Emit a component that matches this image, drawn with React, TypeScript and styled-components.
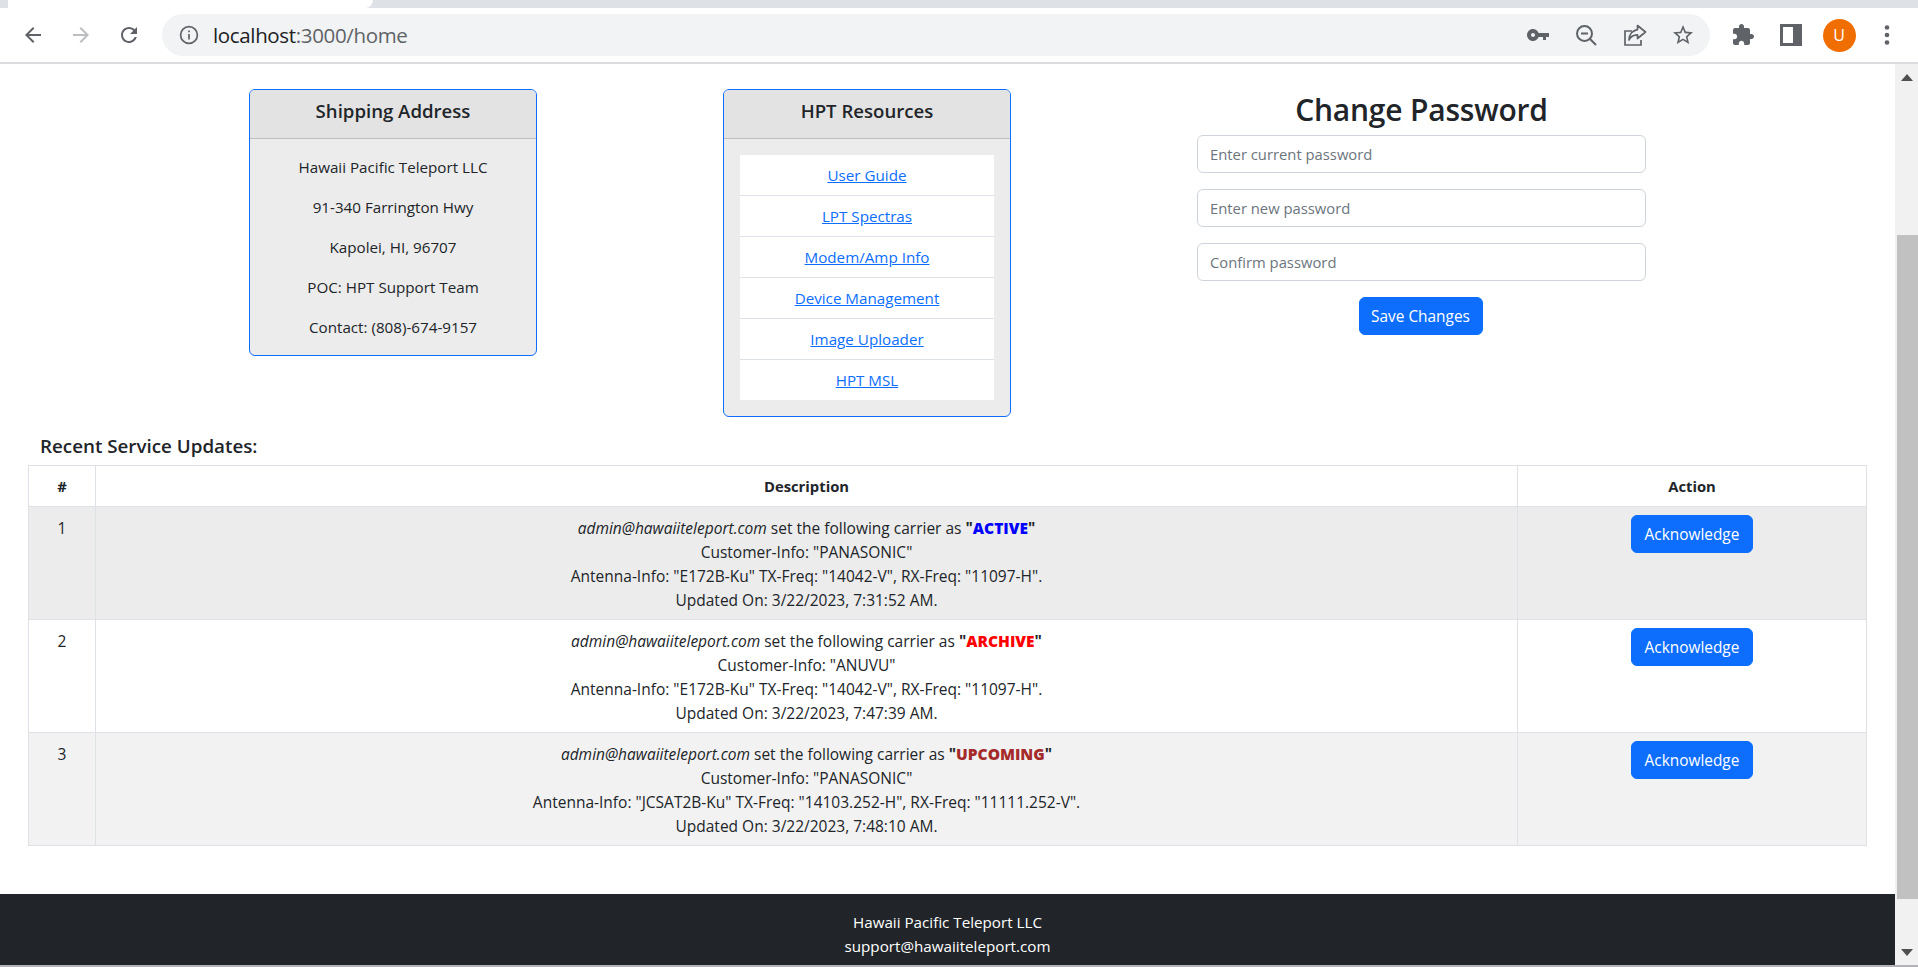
import styled, { createGlobalStyle } from "styled-components";

const GlobalStyle = createGlobalStyle`
  html, body {
    margin: 0;
    height: 967px;
    overflow: hidden;
    background: #ffffff;
  }
  * {
    box-sizing: border-box;
  }
`;

const FONT = `"Open Sans", "Noto Sans", "Liberation Sans", sans-serif`;

const Window = styled.div`
  display: flex;
  flex-direction: column;
  width: 1918px;
  height: 967px;
  overflow: hidden;
  font: 400 15.2px/24px ${FONT};
  color: #212529;
  background: #ffffff;
`;

const TabStrip = styled.div`
  display: flex;
  flex: none;
  height: 8px;
  background: #dee1e6;
`;

const ActiveTab = styled.div`
  width: 365px;
  margin-left: 8px;
  background: #ffffff;
  border-bottom-right-radius: 8px;
`;

const Toolbar = styled.div`
  display: flex;
  flex: none;
  align-items: center;
  height: 56px;
  padding: 0 7px 0 9px;
  background: #ffffff;
  border-bottom: 2px solid #dadce0;
`;

const NavButton = styled.div<{ $muted?: boolean }>`
  display: flex;
  flex: none;
  align-items: center;
  justify-content: center;
  width: 48px;
  height: 40px;
  color: ${(p) => (p.$muted ? "#bcbec1" : "#5f6368")};
`;

const Omnibox = styled.div`
  display: flex;
  flex: 1;
  align-items: center;
  height: 42px;
  margin: 0 9px;
  padding: 0 3px 0 17px;
  border-radius: 21px;
  background: #f1f3f4;
`;

const SiteInfo = styled.div`
  display: flex;
  flex: none;
  color: #5f6368;
  margin-right: 14px;
`;

const Url = styled.div`
  flex: 1;
  font: 400 20.5px/28px ${FONT};
  letter-spacing: -0.35px;
  color: #5f6368;
  & > b {
    font-weight: 400;
    color: #202124;
  }
`;

const OmniIcon = styled.div`
  display: flex;
  flex: none;
  align-items: center;
  justify-content: center;
  width: 48.3px;
  color: #5f6368;
`;

const ToolIcon = styled.div`
  display: flex;
  flex: none;
  align-items: center;
  justify-content: center;
  width: 48px;
  color: #5f6368;
`;

const Avatar = styled.div`
  display: flex;
  align-items: center;
  justify-content: center;
  width: 33px;
  height: 33px;
  border-radius: 50%;
  background: #f06e00;
  color: #ffffff;
  font: 400 16px/1 ${FONT};
`;

const Viewport = styled.div`
  display: flex;
  flex: 1;
  min-height: 0;
`;

const Page = styled.div`
  flex: 1;
  min-width: 0;
  overflow: hidden;
`;

const TopRow = styled.div`
  display: flex;
  align-items: flex-start;
  gap: 186px;
  padding: 25px 0 0 249px;
`;

const Card = styled.section`
  width: 288px;
  flex: none;
  border: 1px solid #0d6efd;
  border-radius: 6px;
  background: #ececec;
  overflow: hidden;
`;

const CardHeader = styled.h5`
  margin: 0;
  height: 49px;
  padding-top: 9px;
  font: 600 18.6px/24px ${FONT};
  text-align: center;
  color: #212529;
  background: #e3e3e3;
  border-bottom: 1px solid #bfbfbf;
`;

const CardBody = styled.div`
  padding: 16px;
  text-align: center;
`;

const AddressLine = styled.p`
  margin: 0 0 16px;
  &:last-child {
    margin-bottom: 0;
  }
`;

const LinkList = styled.ul`
  margin: 0;
  padding: 0;
  list-style: none;
  background: #ffffff;
`;

const LinkItem = styled.li`
  height: 41px;
  padding-top: 8px;
  border-bottom: 1px solid #dee2e6;
  &:last-child {
    height: 40px;
    border-bottom: 0;
  }
  & > a {
    color: #0d6efd;
    text-decoration: underline;
  }
`;

const PasswordForm = styled.form`
  display: flex;
  flex-direction: column;
  align-items: center;
  width: 449px;
  flex: none;
`;

const FormTitle = styled.h2`
  margin: 0 0 5px;
  height: 41px;
  font: 600 30px/41px ${FONT};
  letter-spacing: -0.2px;
  color: #212529;
`;

const PasswordInput = styled.input`
  display: block;
  width: 100%;
  height: 38px;
  margin-bottom: 16px;
  padding: 6px 12px;
  border: 1px solid #ced4da;
  border-radius: 6px;
  background: #ffffff;
  outline: none;
  font: 400 14.8px/24px ${FONT};
  &::placeholder {
    color: #6c757d;
    opacity: 1;
  }
`;

const PrimaryButton = styled.button`
  display: inline-block;
  width: 122px;
  height: 38px;
  padding: 2px 0 0;
  border: 1px solid #0d6efd;
  border-radius: 6px;
  background: #0d6efd;
  color: #ffffff;
  font: 400 15.4px/24px ${FONT};
`;

const SaveButton = styled(PrimaryButton)`
  width: 124px;
  margin-right: 2px;
`;

const UpdatesSection = styled.section`
  padding: 17px 28px 48px;
`;

const SectionTitle = styled.h5`
  margin: 0 0 7px;
  padding-left: 12px;
  font: 600 18.8px/24px ${FONT};
  color: #212529;
`;

const UpdatesTable = styled.table`
  width: 100%;
  table-layout: fixed;
  border-collapse: collapse;
  font-size: 15.5px;
`;

const HeadCell = styled.th`
  padding: 8px;
  border: 1px solid #dee2e6;
  font: 700 14.8px/24px ${FONT};
  text-align: center;
`;

const Row = styled.tr<{ $bg: string }>`
  background: ${(p) => p.$bg};
`;

const Cell = styled.td`
  padding: 9px 8px 7px;
  border: 1px solid #dee2e6;
  text-align: center;
  vertical-align: top;
`;

const ActionCell = styled(Cell)`
  padding: 8px;
`;

const Status = styled.b<{ $color: string }>`
  color: ${(p) => p.$color};
`;

const Footer = styled.footer`
  height: 100px;
  padding: 16px 0;
  background: #212529;
  color: #ffffff;
  text-align: center;
`;

const Scrollbar = styled.div`
  display: flex;
  flex: none;
  flex-direction: column;
  width: 23px;
  background: #f1f1f1;
`;

const ScrollArrow = styled.div`
  display: flex;
  flex: none;
  align-items: center;
  justify-content: center;
  height: 26px;
  color: #505050;
`;

const ScrollGap = styled.div<{ $h: number }>`
  flex: none;
  height: ${(p) => p.$h}px;
`;

const ScrollThumb = styled.div`
  flex: none;
  height: 664px;
  margin-left: 2px;
  background: #c1c1c1;
`;

const BottomEdge = styled.div`
  flex: none;
  height: 2px;
  background: #b4b2b7;
`;

type UpdateRow = {
  user: string;
  status: string;
  color: string;
  customer: string;
  antenna: string;
  tx: string;
  rx: string;
  updated: string;
  bg: string;
};

const ROWS: UpdateRow[] = [
  {
    user: "admin@hawaiiteleport.com",
    status: "ACTIVE",
    color: "#0000ff",
    customer: "PANASONIC",
    antenna: "E172B-Ku",
    tx: "14042-V",
    rx: "11097-H",
    updated: "3/22/2023, 7:31:52 AM.",
    bg: "#ececec",
  },
  {
    user: "admin@hawaiiteleport.com",
    status: "ARCHIVE",
    color: "#ff0000",
    customer: "ANUVU",
    antenna: "E172B-Ku",
    tx: "14042-V",
    rx: "11097-H",
    updated: "3/22/2023, 7:47:39 AM.",
    bg: "#ffffff",
  },
  {
    user: "admin@hawaiiteleport.com",
    status: "UPCOMING",
    color: "#a52a2a",
    customer: "PANASONIC",
    antenna: "JCSAT2B-Ku",
    tx: "14103.252-H",
    rx: "11111.252-V",
    updated: "3/22/2023, 7:48:10 AM.",
    bg: "#f2f2f2",
  },
];

const ADDRESS = [
  "Hawaii Pacific Teleport LLC",
  "91-340 Farrington Hwy",
  "Kapolei, HI, 96707",
  "POC: HPT Support Team",
  "Contact: (808)-674-9157",
];

const LINKS = ["User Guide", "LPT Spectras", "Modem/Amp Info", "Device Management", "Image Uploader", "HPT MSL"];

const Icon = ({ d, size = 24 }: { d: string; size?: number }) => (
  <svg width={size} height={size} viewBox="0 0 24 24" fill="currentColor">
    <path d={d} />
  </svg>
);

const BACK = "M20 11H7.83l5.59-5.59L12 4l-8 8 8 8 1.41-1.41L7.83 13H20v-2z";
const FORWARD = "M4 11h12.17l-5.59-5.59L12 4l8 8-8 8-1.41-1.41L16.17 13H4v-2z";
const RELOAD =
  "M17.65 6.35C16.2 4.9 14.21 4 12 4c-4.42 0-7.99 3.58-7.99 8s3.57 8 7.99 8c3.73 0 6.84-2.55 7.73-6h-2.08c-.82 2.33-3.04 4-5.65 4-3.31 0-6-2.69-6-6s2.69-6 6-6c1.66 0 3.14.69 4.22 1.78L13 11h7V4l-2.35 2.35z";
const KEY =
  "M12.65 10C11.83 7.67 9.61 6 7 6c-3.31 0-6 2.69-6 6s2.69 6 6 6c2.61 0 4.83-1.67 5.65-4H17v3h3v-3h3v-4H12.65zM7 14c-1.1 0-2-.9-2-2s.9-2 2-2 2 .9 2 2-.9 2-2 2z";
const STAR =
  "M22 9.24l-7.19-.62L12 2 9.19 8.63 2 9.24l5.46 4.73L5.82 21 12 17.27 18.18 21l-1.63-7.03L22 9.24zM12 15.4l-3.76 2.27 1-4.28-3.32-2.88 4.38-.38L12 6.1l1.71 4.04 4.38.38-3.32 2.88 1 4.28L12 15.4z";
const PUZZLE =
  "M20.5 11H19V7c0-1.1-.9-2-2-2h-4V3.5C13 2.12 11.88 1 10.5 1S8 2.12 8 3.5V5H4c-1.1 0-1.99.9-1.99 2v3.8H3.5c1.49 0 2.7 1.21 2.7 2.7s-1.21 2.7-2.7 2.7H2V20c0 1.1.9 2 2 2h3.8v-1.5c0-1.49 1.21-2.7 2.7-2.7 1.49 0 2.7 1.21 2.7 2.7V22H17c1.1 0 2-.9 2-2v-4h1.5c1.38 0 2.5-1.12 2.5-2.5S21.88 11 20.5 11z";

const InfoIcon = () => (
  <svg width="20" height="20" viewBox="0 0 20 20" fill="none" stroke="currentColor" strokeWidth="1.7">
    <circle cx="10" cy="10" r="8.4" />
    <path d="M10 9v5.5" />
    <path d="M10 5.4v1.8" />
  </svg>
);

const ZoomOutIcon = () => (
  <svg width="24" height="24" viewBox="0 0 24 24" fill="none" stroke="currentColor" strokeWidth="2">
    <circle cx="10.5" cy="10.5" r="7.5" />
    <path d="M7 10.5h7" />
    <path d="M16 16l6 6" />
  </svg>
);

const ShareIcon = () => (
  <svg width="24" height="24" viewBox="0 0 24 24" fill="none" stroke="currentColor" strokeWidth="1.7">
    <path d="M9 8H2v14h16v-5" />
    <path d="M14.5 2.5L22.5 9l-8 6.5v-3.6C10.5 12 7.5 13.500 6 17c0-5.500 3.500-9.500 8.500-10.400z" strokeLinejoin="round" />
  </svg>
);

const PanelIcon = () => (
  <svg width="22" height="22" viewBox="0 0 22 22" fill="currentColor">
    <path fillRule="evenodd" d="M0 0h22v22H0zM3 3v16h10V3z" />
  </svg>
);

const DotsIcon = () => (
  <svg width="6" height="20" viewBox="0 0 6 20" fill="currentColor">
    <circle cx="3" cy="2.500" r="2.300" />
    <circle cx="3" cy="10" r="2.300" />
    <circle cx="3" cy="17.500" r="2.300" />
  </svg>
);

const Triangle = ({ up }: { up?: boolean }) => (
  <svg width="12" height="7" viewBox="0 0 12 7" fill="currentColor">
    <path d={up ? "M6 0l6 7H0z" : "M0 0h12L6 7z"} />
  </svg>
);

export default function App() {
  return (
    <>
      <GlobalStyle />
      <Window>
        <TabStrip>
          <ActiveTab />
        </TabStrip>
        <Toolbar>
          <NavButton>
            <Icon d={BACK} />
          </NavButton>
          <NavButton $muted>
            <Icon d={FORWARD} />
          </NavButton>
          <NavButton>
            <Icon d={RELOAD} />
          </NavButton>
          <Omnibox>
            <SiteInfo>
              <InfoIcon />
            </SiteInfo>
            <Url>
              <b>localhost</b>:3000/home
            </Url>
            <OmniIcon>
              <Icon d={KEY} />
            </OmniIcon>
            <OmniIcon>
              <ZoomOutIcon />
            </OmniIcon>
            <OmniIcon>
              <ShareIcon />
            </OmniIcon>
            <OmniIcon>
              <Icon d={STAR} />
            </OmniIcon>
          </Omnibox>
          <ToolIcon>
            <Icon d={PUZZLE} />
          </ToolIcon>
          <ToolIcon>
            <PanelIcon />
          </ToolIcon>
          <ToolIcon>
            <Avatar>U</Avatar>
          </ToolIcon>
          <ToolIcon>
            <DotsIcon />
          </ToolIcon>
        </Toolbar>
        <Viewport>
          <Page>
            <TopRow>
              <Card>
                <CardHeader>Shipping Address</CardHeader>
                <CardBody>
                  {ADDRESS.map((line) => (
                    <AddressLine key={line}>{line}</AddressLine>
                  ))}
                </CardBody>
              </Card>
              <Card>
                <CardHeader>HPT Resources</CardHeader>
                <CardBody>
                  <LinkList>
                    {LINKS.map((link) => (
                      <LinkItem key={link}>
                        <a href="#">{link}</a>
                      </LinkItem>
                    ))}
                  </LinkList>
                </CardBody>
              </Card>
              <PasswordForm>
                <FormTitle>Change Password</FormTitle>
                <PasswordInput placeholder="Enter current password" />
                <PasswordInput placeholder="Enter new password" />
                <PasswordInput placeholder="Confirm password" />
                <SaveButton type="button">Save Changes</SaveButton>
              </PasswordForm>
            </TopRow>
            <UpdatesSection>
              <SectionTitle>Recent Service Updates:</SectionTitle>
              <UpdatesTable>
                <colgroup>
                  <col width="67" />
                  <col />
                  <col width="349" />
                </colgroup>
                <thead>
                  <tr>
                    <HeadCell>#</HeadCell>
                    <HeadCell>Description</HeadCell>
                    <HeadCell>Action</HeadCell>
                  </tr>
                </thead>
                <tbody>
                  {ROWS.map((row, i) => (
                    <Row key={row.status} $bg={row.bg}>
                      <Cell>{i + 1}</Cell>
                      <Cell>
                        <em>{row.user}</em> set the following carrier as{" "}
                        <b>
                          "<Status $color={row.color}>{row.status}</Status>"
                        </b>
                        <br />
                        Customer-Info: "{row.customer}"
                        <br />
                        Antenna-Info: "{row.antenna}" TX-Freq: "{row.tx}", RX-Freq: "{row.rx}".
                        <br />
                        Updated On: {row.updated}
                      </Cell>
                      <ActionCell>
                        <PrimaryButton type="button">Acknowledge</PrimaryButton>
                      </ActionCell>
                    </Row>
                  ))}
                </tbody>
              </UpdatesTable>
            </UpdatesSection>
            <Footer>
              Hawaii Pacific Teleport LLC
              <br />
              support@hawaiiteleport.com
              <br />
              (808)-674-9157
            </Footer>
          </Page>
          <Scrollbar>
            <ScrollArrow>
              <Triangle up />
            </ScrollArrow>
            <ScrollGap $h={145} />
            <ScrollThumb />
            <ScrollGap $h={40} />
            <ScrollArrow>
              <Triangle />
            </ScrollArrow>
          </Scrollbar>
        </Viewport>
        <BottomEdge />
      </Window>
    </>
  );
}
